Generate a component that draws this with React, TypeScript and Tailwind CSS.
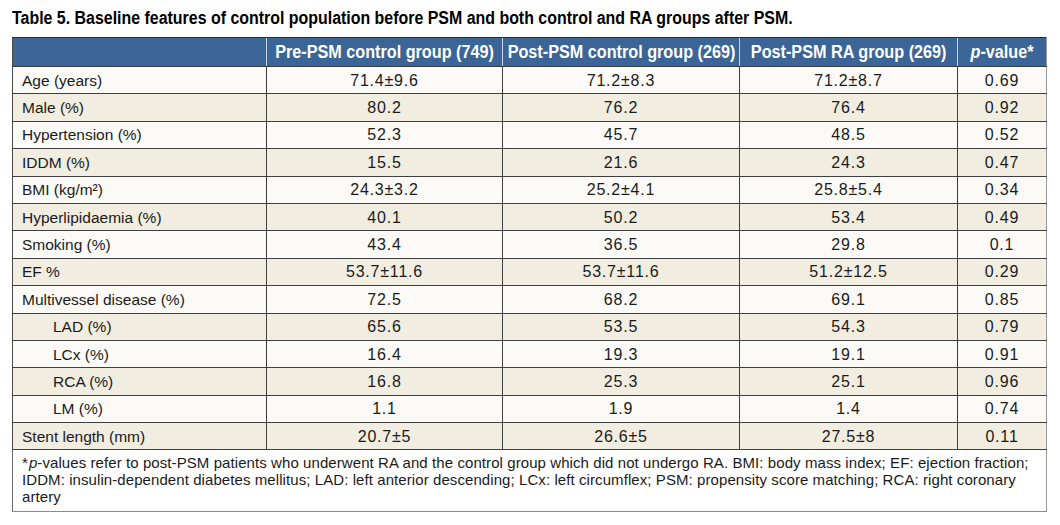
import React from "react";

const rows: { label: string; indent?: boolean; v: [string, string, string, string] }[] = [
  { label: "Age (years)", v: ["71.4±9.6", "71.2±8.3", "71.2±8.7", "0.69"] },
  { label: "Male (%)", v: ["80.2", "76.2", "76.4", "0.92"] },
  { label: "Hypertension (%)", v: ["52.3", "45.7", "48.5", "0.52"] },
  { label: "IDDM (%)", v: ["15.5", "21.6", "24.3", "0.47"] },
  { label: "BMI (kg/m²)", v: ["24.3±3.2", "25.2±4.1", "25.8±5.4", "0.34"] },
  { label: "Hyperlipidaemia (%)", v: ["40.1", "50.2", "53.4", "0.49"] },
  { label: "Smoking (%)", v: ["43.4", "36.5", "29.8", "0.1"] },
  { label: "EF %", v: ["53.7±11.6", "53.7±11.6", "51.2±12.5", "0.29"] },
  { label: "Multivessel disease (%)", v: ["72.5", "68.2", "69.1", "0.85"] },
  { label: "LAD (%)", indent: true, v: ["65.6", "53.5", "54.3", "0.79"] },
  { label: "LCx (%)", indent: true, v: ["16.4", "19.3", "19.1", "0.91"] },
  { label: "RCA (%)", indent: true, v: ["16.8", "25.3", "25.1", "0.96"] },
  { label: "LM (%)", indent: true, v: ["1.1", "1.9", "1.4", "0.74"] },
  { label: "Stent length (mm)", v: ["20.7±5", "26.6±5", "27.5±8", "0.11"] },
];

function HeadText({ children }: { children: React.ReactNode }) {
  return (
    <div className="flex justify-center">
      <span className="inline-block shrink-0 whitespace-nowrap origin-center scale-x-[0.9]">{children}</span>
    </div>
  );
}

const valCls = "border-b border-b-[#3f3f3f] border-r text-center leading-[17px] p-0 text-[16px] tracking-[0.8px]";

export default function App() {
  return (
    <div className="bg-white w-[1060px] h-[525px] pl-3 pt-[7px] font-['Liberation_Sans',Arial,sans-serif] text-[#1a1a1a]">
      <div className="h-[23px] font-bold text-[18px] leading-[22px] text-black whitespace-nowrap">
        <span className="inline-block origin-left scale-x-[0.885]">
          Table 5. Baseline features of control population before PSM and both control and RA groups after PSM.
        </span>
      </div>
      <table className="mt-[7px] w-[1034px] border-collapse table-fixed text-[15px]">
        <colgroup>
          <col className="w-[254px]" />
          <col className="w-[236px]" />
          <col className="w-[237px]" />
          <col className="w-[218px]" />
          <col className="w-[89px]" />
        </colgroup>
        <thead>
          <tr className="h-[29px] bg-[#3a6596] text-white font-bold text-[18px] leading-[20px]">
            <th className="border-t border-t-[#2b2b2b] border-l border-l-[#4a4a4a] border-b border-b-[#3a3a3a]" />
            <th className="border-t border-t-[#2b2b2b] border-l border-l-[#c9d5e3] border-b border-b-[#3a3a3a] font-bold p-0">
              <HeadText>Pre-PSM control group (749)</HeadText>
            </th>
            <th className="border-t border-t-[#2b2b2b] border-l border-l-[#c9d5e3] border-b border-b-[#3a3a3a] font-bold p-0">
              <HeadText>Post-PSM control group (269)</HeadText>
            </th>
            <th className="border-t border-t-[#2b2b2b] border-l border-l-[#c9d5e3] border-b border-b-[#3a3a3a] font-bold p-0">
              <HeadText>Post-PSM RA group (269)</HeadText>
            </th>
            <th className="border-t border-t-[#2b2b2b] border-l border-l-[#c9d5e3] border-r border-r-[#9a9a9a] border-b border-b-[#3a3a3a] font-bold p-0">
              <HeadText>
                <span className="italic">p</span>-value*
              </HeadText>
            </th>
          </tr>
        </thead>
        <tbody>
          {rows.map((r, i) => (
            <tr key={r.label} className={`h-[27.4px] ${i % 2 === 0 ? "bg-[#fbfaf6]" : "bg-[#f1ede0]"}`}>
              <td className={`border-l border-l-[#4a4a4a] border-b border-b-[#3f3f3f] border-r border-r-[#3f3f3f] leading-[17px] p-0 text-[15.5px] ${r.indent ? "pl-[40px]" : "pl-[9px]"}`}>
                {r.label}
              </td>
              <td className={`${valCls} border-r-[#3f3f3f]`}>{r.v[0]}</td>
              <td className={`${valCls} border-r-[#3f3f3f]`}>{r.v[1]}</td>
              <td className={`${valCls} border-r-[#3f3f3f]`}>{r.v[2]}</td>
              <td className={`${valCls} border-r-[#9a9a9a]`}>{r.v[3]}</td>
            </tr>
          ))}
          <tr className="bg-white">
            <td colSpan={5} className="border-l border-l-[#6a6a6a] border-r border-r-[#9a9a9a] border-b border-b-[#8a8a8a] pl-[9px] pr-[8px] pt-[4px] pb-[6px] leading-[17px] text-[15px] tracking-[0.08px]">
              *<span className="italic pl-[1px]">p</span>-values refer to post-PSM patients who underwent RA and the control group which did not undergo RA. BMI: body mass index; EF: ejection fraction; IDDM: insulin-dependent diabetes mellitus; LAD: left anterior descending; LCx: left circumflex; PSM: propensity score matching; RCA: right coronary artery
            </td>
          </tr>
        </tbody>
      </table>
    </div>
  );
}
